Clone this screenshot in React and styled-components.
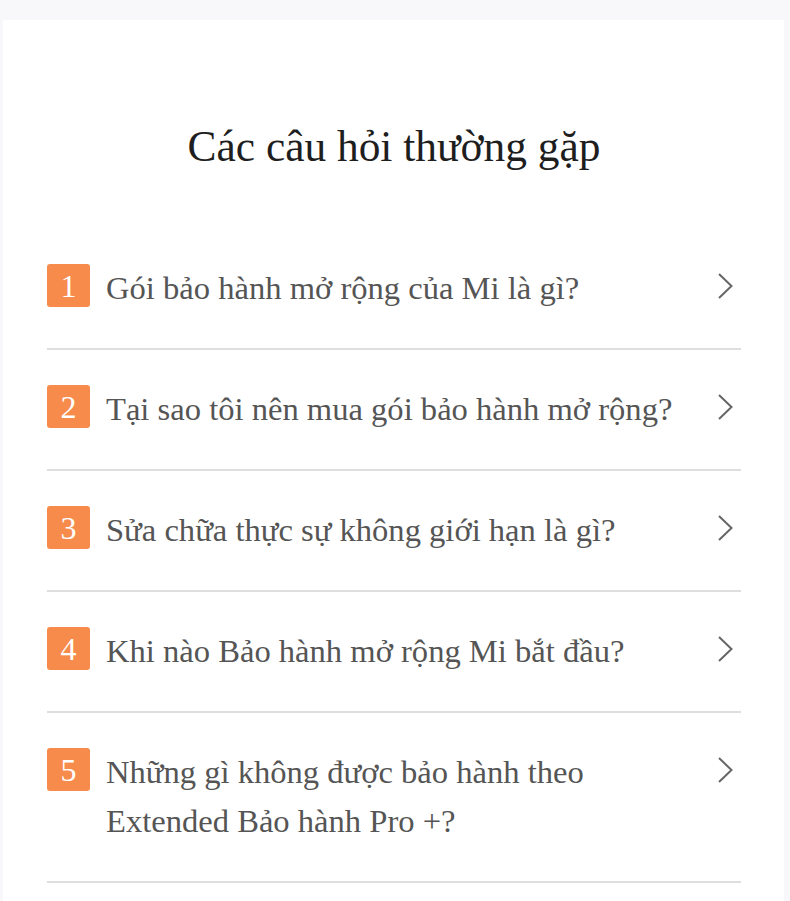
import React from "react";
import styled, { createGlobalStyle } from "styled-components";

const GlobalStyle = createGlobalStyle`
  html, body {
    margin: 0;
    padding: 0;
    background-color: #f8f8fa;
  }
  body {
    font-family: "Liberation Serif", "Times New Roman", serif;
  }
`;

const Page = styled.div`
  padding: 20px 6px 0 3px;
`;

const Card = styled.section`
  background-color: #ffffff;
  padding: 0 43px 40px 44px;
  min-height: 900px;
`;

const Title = styled.h2`
  margin: 0;
  padding: 100px 0 57px;
  font-size: 43.4px;
  font-weight: normal;
  line-height: 52px;
  color: #1e1e1e;
  text-align: center;
`;

const List = styled.ul`
  list-style: none;
  margin: 0;
  padding: 0;
`;

const Item = styled.li`
  display: flex;
  align-items: flex-start;
  padding: 35px 0;
  border-bottom: 2px solid #dedede;
`;

const Badge = styled.span`
  flex: none;
  display: flex;
  align-items: center;
  justify-content: center;
  width: 43px;
  height: 43px;
  border-radius: 3px;
  background-color: #f78b4b;
  color: #ffffff;
  font-size: 32px;
  line-height: 1;
`;

const Question = styled.span`
  flex: 1;
  margin-left: 16px;
  font-size: 32.6px;
  line-height: 49px;
  color: #555555;
`;

const Chevron = styled.svg`
  flex: none;
  width: 17px;
  height: 28px;
  margin: 8px 7px 0 30px;
`;

const questions = [
  "Gói bảo hành mở rộng của Mi là gì?",
  "Tại sao tôi nên mua gói bảo hành mở rộng?",
  "Sửa chữa thực sự không giới hạn là gì?",
  "Khi nào Bảo hành mở rộng Mi bắt đầu?",
  "Những gì không được bảo hành theo Extended Bảo hành Pro +?",
];

const FaqItem = ({ index, text }) => (
  <Item>
    <Badge>{index}</Badge>
    <Question>{text}</Question>
    <Chevron viewBox="0 0 17 28" aria-hidden="true">
      <polyline
        points="2,2 14.5,14 2,26"
        fill="none"
        stroke="#666666"
        strokeWidth="2"
      />
    </Chevron>
  </Item>
);

const App = () => {
  return (
    <>
      <GlobalStyle />
      <Page>
        <Card>
          <Title>Các câu hỏi thường gặp</Title>
          <List>
            {questions.map((q, i) => (
              <FaqItem key={i} index={i + 1} text={q} />
            ))}
          </List>
        </Card>
      </Page>
    </>
  );
};

export default App;
